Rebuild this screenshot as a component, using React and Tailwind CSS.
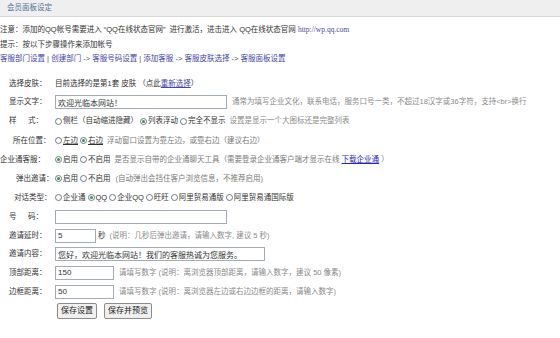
import React from 'react'

// 单选按钮（XP 风格，选中为绿色圆点）
function Radio({ checked }) {
  return (
    <span className="relative inline-block w-[7px] h-[7px] rounded-full border border-[#6b7b8c] bg-white shrink-0">
      {checked && <span className="absolute inset-[1px] rounded-full bg-[#2f9a3c]" />}
    </span>
  )
}

// 单选项：圆点 + 文字
function Opt({ checked, u, children }) {
  return (
    <span className="flex items-center mr-[2px]">
      <Radio checked={checked} />
      <span className={`ml-[1px] ${u ? 'underline' : ''}`}>{children}</span>
    </span>
  )
}

// 表单行：左侧标签 + 右侧内容
function Row({ label, pl = 'pl-[9px]', h = 'h-[19px]', children }) {
  return (
    <div className={`flex items-center ${h}`}>
      <div className={`w-[55px] shrink-0 text-[#333] ${pl}`}>{label}</div>
      <div className="flex items-center whitespace-nowrap">{children}</div>
    </div>
  )
}

function Spread({ a, b }) {
  return (
    <div className="flex justify-between w-[34px]">
      <span>{a}</span>
      <span>{b}</span>
    </div>
  )
}

const inputCls =
  'h-[14px] border border-[#a3abb5] bg-white px-[2px] text-[8px] text-[#333] outline-none'

export default function App() {
  return (
    <div className="w-[560px] h-[338px] bg-white text-[7.5px] leading-none text-[#333] font-['Liberation_Sans','Noto_Sans_CJK_SC',sans-serif] overflow-hidden">
      {/* 顶部标题栏 */}
      <div className="h-[17px] bg-[#efefef] border-b border-[#d6d6d6] flex items-center pl-[7px] text-[#52739a]">
        会员面板设定
      </div>

      {/* 说明文字 */}
      <div className="pt-[6px] leading-[14.5px] whitespace-nowrap">
        <div>
          注意：添加的QQ帐号需要进入 “QQ在线状态官网” &nbsp;进行激活，进击进入 QQ在线状态官网{' '}
          <span className="font-['Liberation_Serif',serif] text-[#4a4a9a]">http://wp.qq.com</span>
        </div>
        <div>提示：按以下步骤操作来添加帐号</div>
        <div className="text-[#4646a6]">
          客服部门设置 <span className="text-[#555]">|</span> 创建部门 <span className="text-[#555]">-&gt;</span> 客服号码设置{' '}
          <span className="text-[#555]">|</span> 添加客服 <span className="text-[#555]">-&gt;</span> 客服皮肤选择{' '}
          <span className="text-[#555]">-&gt;</span> 客服面板设置
        </div>
      </div>

      {/* 表单 */}
      <div className="mt-[8.5px]">
        <Row label="选择皮肤：" h="h-[18px]">
          目前选择的是第1套 皮肤 （点此<span className="underline text-[#4646a6]">重新选择</span>）
        </Row>
        <Row label="显示文字：" h="h-[18px]">
          <input readOnly value="欢迎光临本网站！" className={`${inputCls} w-[172px]`} />
          <span className="ml-[5px] text-[#8a8a8a]">
            通常为填写企业文化，联系电话，服务口号一类，不超过18汉字或36字符，支持&lt;br&gt;换行
          </span>
        </Row>
        <Row label={<Spread a="样" b="式：" />} h="h-[20px]">
          <Opt>侧栏（自动缩进隐藏）</Opt>
          <Opt checked>列表浮动</Opt>
          <Opt>完全不显示</Opt>
          <span className="ml-[2px] text-[#8a8a8a]">设置是显示一个大图标还是完整列表</span>
        </Row>
        <Row label="所在位置：" pl="pl-[13px]">
          <Opt u>左边</Opt>
          <Opt checked u>右边</Opt>
          <span className="ml-[2px] text-[#7a7a7a]">浮动窗口设置为靠左边，或靠右边（建议右边）</span>
        </Row>
        <Row label="企业通客服：" pl="pl-0">
          <Opt checked>启用</Opt>
          <Opt>不启用</Opt>
          <span className="ml-[2px] text-[#7a7a7a]">
            是否显示自带的企业通聊天工具（需要登录企业通客户端才显示在线{' '}
            <span className="underline text-[#2424c4]">下载企业通</span> ）
          </span>
        </Row>
        <Row label="弹出邀请：" pl="pl-[16px]">
          <Opt checked>启用</Opt>
          <Opt>不启用</Opt>
          <span className="ml-[3px] text-[#7a7a7a]">(自动弹出会挡住客户浏览信息，不推荐启用)</span>
        </Row>
        <Row label="对话类型：" pl="pl-[14px]">
          <Opt>企业通</Opt>
          <Opt checked>QQ</Opt>
          <Opt>企业QQ</Opt>
          <Opt>旺旺</Opt>
          <Opt>阿里贸易通版</Opt>
          <Opt>阿里贸易通国际版</Opt>
        </Row>
        <Row label={<Spread a="号" b="码：" />}>
          <input readOnly value="" className={`${inputCls} w-[172px]`} />
        </Row>
        <Row label="邀请延时：">
          <input readOnly value="5" className={`${inputCls} w-[41px]`} />
          <span className="ml-[2px]">秒</span>
          <span className="ml-[4px] text-[#8a8a8a]">(说明：几秒后弹出邀请，请输入数字, 建议 5 秒)</span>
        </Row>
        <Row label="邀请内容：" h="h-[18px]">
          <input
            readOnly
            value="您好，欢迎光临本网站！我们的客服热诚为您服务。"
            className={`${inputCls} w-[210px]`}
          />
        </Row>
        <Row label="顶部距离：">
          <input readOnly value="150" className={`${inputCls} w-[59px]`} />
          <span className="ml-[5px] text-[#8a8a8a]">
            请填写数字 (说明：离浏览器顶部距离，请输入数字，建议 50 像素)
          </span>
        </Row>
        <Row label="边框距离：">
          <input readOnly value="50" className={`${inputCls} w-[59px]`} />
          <span className="ml-[5px] text-[#8a8a8a]">
            请填写数字 (说明：离浏览器左边或右边边框的距离，请输入数字)
          </span>
        </Row>
        <Row label="">
          <button className="ml-[2px] h-[16px] w-[40px] border border-[#8c8c8c] rounded-[2px] bg-[#f0f0f0] text-[8px] text-[#222]">
            保存设置
          </button>
          <button className="ml-[7px] h-[16px] w-[48px] border border-[#8c8c8c] rounded-[2px] bg-[#f0f0f0] text-[8px] text-[#222]">
            保存并预览
          </button>
        </Row>
      </div>
    </div>
  )
}
